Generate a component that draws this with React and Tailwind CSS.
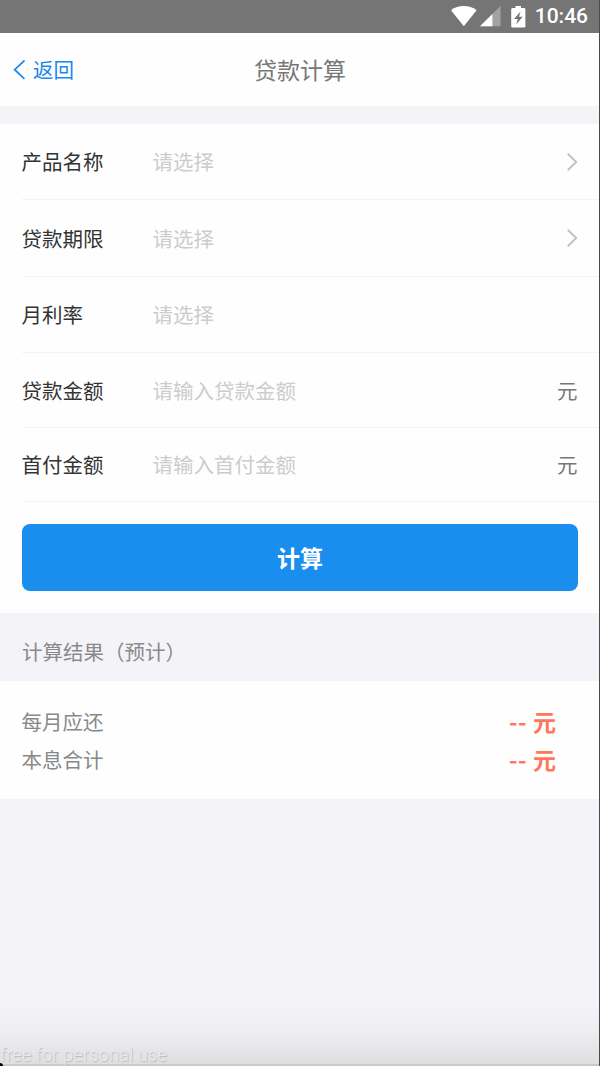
import clsx from "clsx";

const fields = [
  { label: "产品名称", placeholder: "请选择", arrow: true, height: "h-[76px]" },
  { label: "贷款期限", placeholder: "请选择", arrow: true, height: "h-[77px]" },
  { label: "月利率", placeholder: "请选择", height: "h-[76px]" },
  { label: "贷款金额", placeholder: "请输入贷款金额", unit: "元", height: "h-[75px]" },
  { label: "首付金额", placeholder: "请输入首付金额", unit: "元", height: "h-[74px]" },
];

const results = [
  { label: "每月应还", value: "--", unit: "元" },
  { label: "本息合计", value: "--", unit: "元" },
];

const StatusBar = () => (
  <div className="flex h-[33px] shrink-0 items-center justify-end bg-[#757575] pr-3 text-white">
    {/* Wifi */}
    <svg className="h-[21px] w-[26px]" viewBox="0 0 26 21" fill="currentColor">
      <path d="M0 4.3C7.3-1.3 18.3-1.3 25.6 4.3L12.8 20.2Z" />
    </svg>
    {/* Signal */}
    <svg className="ml-[3px] h-[21px] w-[21px]" viewBox="0 0 21 21">
      <path d="M20.5 0V20.2H0Z" fill="#a3a3a3" />
      <path d="M12.4 8V20.2H0Z" fill="#fff" />
    </svg>
    {/* Battery */}
    <svg className="ml-[10px] h-[22px] w-[15px]" viewBox="0 0 15 22">
      <path d="M4.5 0H10V2H13C13.8 2 14.4 2.6 14.4 3.4V20.2C14.4 21 13.8 21.6 13 21.6H1.6C.8 21.6.2 21 .2 20.2V3.4C.2 2.6.8 2 1.6 2H4.5Z" fill="#fff" />
      <path d="M9.5 5.5L3 13H6.8L5.2 18.5L11.6 10.8H8Z" fill="#757575" />
    </svg>
    <span className="ml-[9px] font-['Roboto'] text-[21px] leading-none font-medium">10:46</span>
  </div>
);

const Header = () => (
  <header className="grid h-[73px] shrink-0 grid-cols-3 items-center bg-[#fefefe]">
    <button className="flex items-center pl-[13px] text-[20.5px] text-[#1989ee]">
      <svg className="mr-2 h-5 w-3" viewBox="0 0 12 20" fill="none" stroke="currentColor" strokeWidth="1.8">
        <path d="M11.5 .5L1.7 9.7L11.5 18.9" />
      </svg>
      返回
    </button>
    <h1 className="text-center text-[23px] text-[#777777]">贷款计算</h1>
  </header>
);

const Field = ({ label, placeholder, arrow, unit, height }) => (
  <div className={clsx("flex items-center border-b border-[#f3f3f3] pr-[22.5px]", height)}>
    <span className="w-[131px] text-[#333333]">{label}</span>
    <span className="flex-1 text-[#cccccc]">{placeholder}</span>
    {arrow && (
      <svg className="h-[18px] w-[11px]" viewBox="0 0 11 18" fill="none" stroke="#c4c4c4" strokeWidth="2">
        <path d="M.7 .7L9.2 9L.7 17.3" />
      </svg>
    )}
    {unit && <span className="text-[#777777]">{unit}</span>}
  </div>
);

const App = () => {
  return (
    <div
      lang="zh-CN"
      className="relative flex h-[1066px] w-[600px] flex-col overflow-hidden bg-[#f4f3f8] font-['Noto_Sans_CJK_SC',sans-serif] text-[20.5px] leading-none"
    >
      <StatusBar />
      <Header />

      <section className="mt-[18px] h-[489px] shrink-0 bg-[#fefefe] pl-[21.5px]">
        {fields.map((field) => (
          <Field key={field.label} {...field} />
        ))}
        <button className="mt-[22px] flex h-[67px] w-[556px] items-center justify-center rounded-lg bg-[#1a8eee] pl-px text-[23px] font-bold text-white">
          计算
        </button>
      </section>

      <h2 className="flex h-[68px] shrink-0 items-center pt-2 pl-[22px] text-[#8a8a8a]">计算结果（预计）</h2>

      <section className="h-[118px] shrink-0 bg-[#fefefe] pt-[21px] pr-[44px] pl-[21.5px]">
        {results.map((item) => (
          <div key={item.label} className="flex h-[38px] items-center">
            <span className="flex-1 text-[#888888]">{item.label}</span>
            <span className="flex gap-[6px] text-[23px] font-bold text-[#ff7758]">
              <span className="tracking-[0.5px]">{item.value}</span>
              <span>{item.unit}</span>
            </span>
          </div>
        ))}
      </section>

      {/* Bottom shade */}
      <div className="mt-auto flex h-[66px] items-end border-b-2 border-[#c9c8cd] bg-linear-to-b from-[#f4f3f8] via-[#eeedf1] to-[#dfdfe1]">
        <span className="font-['Roboto'] text-[18.5px] leading-[17px] font-light text-[#e9e9eb] [text-shadow:1px_1px_1px_#b9b9bc]">
          free for personal use
        </span>
      </div>

      {/* Screen edges */}
      <div className="absolute top-0 right-0 h-full w-px bg-[#4a4a4a]" />
      <div className="absolute bottom-0 left-0 h-[3px] w-[3px] rounded-tr-full bg-black" />
    </div>
  );
};

export default App;
